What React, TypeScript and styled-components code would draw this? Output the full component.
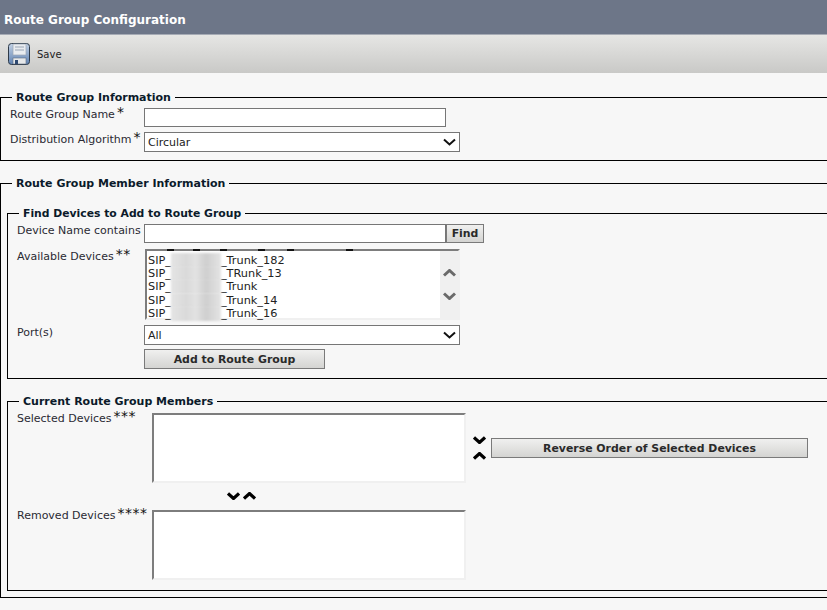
import React from "react";
import styled, { createGlobalStyle } from "styled-components";

const Global = createGlobalStyle`
  html, body { margin: 0; padding: 0; background: #f7f7f7; }
  body { font-family: "DejaVu Sans", Verdana, sans-serif; font-size: 11px; color: #1a1a1a; overflow: hidden; }
`;

const Page = styled.div`
  width: 827px;
  height: 610px;
  overflow: hidden;
  background: #f7f7f7;
`;

const TitleBar = styled.div`
  height: 35px;
  box-sizing: border-box;
  padding: 12px 0 0 4px;
  background: #6d7688;
  border-bottom: 1px solid #a6abb5;
  color: #fff;
  font: bold 12px/16px "DejaVu Sans", sans-serif;
`;

const Toolbar = styled.div`
  height: 38px;
  box-sizing: border-box;
  display: flex;
  align-items: center;
  gap: 6px;
  padding: 0 0 0 7px;
  background: linear-gradient(#e6e6e4, #c9c9c7);
  font-size: 10px;
  color: #222;
`;

const Content = styled.div`
  width: 1000px;
  padding-top: 16px;
`;

const Box = styled.fieldset<{ $nested?: boolean; $h: number; $gap?: number; $top?: number; $pad?: number }>`
  box-sizing: border-box;
  margin: ${(p) => p.$top ?? 0}px 0 ${(p) => p.$gap ?? 0}px ${(p) => (p.$nested ? 6 : 0)}px;
  padding: ${(p) => p.$pad ?? 0}px 0 0;
  height: ${(p) => p.$h}px;
  border: 1px solid #000;
  min-width: 0;
`;

const Legend = styled.legend<{ $tight?: boolean }>`
  margin-left: 11px;
  padding: 2px 4px 0;
  font: bold ${(p) => (p.$tight ? 10.8 : 11)}px/14px "DejaVu Sans", sans-serif;
  color: #0b1a2a;
  white-space: nowrap;
`;

const Row = styled.div<{ $h: number; $left: number }>`
  display: flex;
  align-items: flex-start;
  height: ${(p) => p.$h}px;
  padding-left: ${(p) => p.$left}px;
`;

const Label = styled.div<{ $w: number; $lift?: number }>`
  width: ${(p) => p.$w}px;
  flex: none;
  margin-top: ${(p) => -(p.$lift ?? 0)}px;
  line-height: 14px;
  color: #2a2a33;
  white-space: nowrap;
`;

const Star = styled.span`
  font-size: 14px;
  line-height: 10px;
  letter-spacing: 0.5px;
  color: #111;
  margin-left: 2px;
  position: relative;
  top: -1px;
`;

const TextInput = styled.div<{ $w: number }>`
  box-sizing: border-box;
  width: ${(p) => p.$w}px;
  height: 19px;
  background: #fff;
  border: 1px solid #767676;
`;

const Select = styled.div<{ $w: number }>`
  box-sizing: border-box;
  width: ${(p) => p.$w}px;
  height: 20px;
  background: #fff;
  border: 1px solid #767676;
  display: flex;
  align-items: center;
  justify-content: space-between;
  padding: 0 3px 0 3px;
  color: #222;
  font-size: 11px;
`;

const Button = styled.div<{ $w: number; $h?: number; $nudge?: number }>`
  box-sizing: border-box;
  width: ${(p) => p.$w}px;
  height: ${(p) => p.$h ?? 20}px;
  padding-top: ${(p) => p.$nudge ?? 0}px;
  display: flex;
  align-items: center;
  justify-content: center;
  border: 1px solid #7a7a7a;
  background: linear-gradient(#f0f0ef, #d4d4d2);
  font: bold 10.9px/14px "DejaVu Sans", sans-serif;
  color: #2a2a2a;
  white-space: nowrap;
`;

const ListBox = styled.div`
  position: relative;
  box-sizing: border-box;
  width: 315px;
  height: 71px;
  margin-left: 1px;
  display: flex;
  background: #fff;
  border: 2px solid;
  border-color: #7d7d7d #f0f0f0 #f0f0f0 #7d7d7d;
`;

const ListItems = styled.div`
  flex: 1;
  min-width: 0;
  padding: 3px 0 0 1px;
  font-size: 11.3px;
`;

const Ticks = styled.div`
  position: absolute;
  top: -2px;
  left: 0;
  display: flex;
`;

const Tick = styled.i<{ $x: number }>`
  display: block;
  width: 7px;
  height: 2px;
  margin-left: ${(p) => p.$x}px;
  background: #111;
`;

const ListItem = styled.div<{ $h: number }>`
  height: ${(p) => p.$h}px;
  line-height: 13px;
  display: flex;
  color: #222;
  white-space: pre;
`;

const Blur = styled.span`
  flex: none;
  width: 50px;
  height: 15px;
  margin-top: -1px;
  background: linear-gradient(90deg, #e4e4e4, #dadada 30%, #e2e2e2 50%, #cfcfcf 70%, #e4e4e4);
  filter: blur(1.2px);
`;

const Scrollbar = styled.div`
  flex: none;
  width: 18px;
  background: #f0f0f0;
  display: flex;
  flex-direction: column;
  align-items: center;
  gap: 15px;
  padding-top: 18px;
  box-sizing: border-box;
`;

const SaveIcon = () => (
  <svg width="24" height="24" viewBox="0 0 24 24">
    <defs>
      <linearGradient id="fl" x1="0" y1="0" x2="0" y2="1">
        <stop offset="0" stopColor="#c3d2e6" />
        <stop offset="1" stopColor="#5f82b2" />
      </linearGradient>
    </defs>
    <rect x="1.5" y="1.5" width="21" height="21" rx="3" fill="url(#fl)" stroke="#2e3a48" />
    <rect x="6" y="2" width="13" height="11" fill="#e9ecf0" stroke="#9aa6b5" strokeWidth="0.7" />
    <path d="M8 5h9M8 8h9" stroke="#9aa6b5" strokeWidth="1" />
    <rect x="6" y="16" width="13" height="6" fill="#e6e8ea" stroke="#5f6d80" strokeWidth="0.6" />
    <rect x="8" y="18" width="3" height="4" fill="#2f4a72" />
  </svg>
);

const Chevron = ({ dir, color, size = 13, weight = 2 }: { dir: "up" | "down"; color: string; size?: number; weight?: number }) => (
  <svg width={size} height={8} viewBox="0 0 13 8">
    <path d={dir === "down" ? "M1 1.5 L6.5 6.5 L12 1.5" : "M1 6.5 L6.5 1.5 L12 6.5"} fill="none" stroke={color} strokeWidth={weight} />
  </svg>
);

const Arrow = ({ dir }: { dir: "up" | "down" }) => <Chevron dir={dir} color="#000" size={13} weight={3.2} />;

const MemberGrid = styled.div<{ $h: number }>`
  display: flex;
  align-items: flex-start;
  height: ${(p) => p.$h}px;
  padding-left: 9px;
`;

const Area = styled.div`
  box-sizing: border-box;
  width: 314px;
  height: 70px;
  background: #fff;
  border: 2px solid;
  border-color: #7d7d7d #f0f0f0 #f0f0f0 #7d7d7d;
`;

const ArrowStack = styled.div`
  display: flex;
  flex-direction: column;
  align-items: center;
  gap: 8px;
  margin: 23px 0 0 6px;
  width: 15px;
`;

const ReverseWrap = styled.div`
  margin: 25px 0 0 4px;
`;

const MoveRow = styled.div`
  display: flex;
  gap: 3px;
  height: 24px;
  box-sizing: border-box;
  padding: 0 0 4px 219px;
  align-items: center;
`;

const rows: [string, string, number][] = [
  ["SIP_", "_Trunk_182", 13],
  ["SIP_", "_TRunk_13", 13],
  ["SIP_", "_Trunk", 14],
  ["SIP_", "_Trunk_14", 13],
  ["SIP_", "_Trunk_16", 13],
];

export default function App() {
  return (
    <Page>
      <Global />
      <TitleBar>Route Group Configuration</TitleBar>
      <Toolbar>
        <SaveIcon />
        <span>Save</span>
      </Toolbar>
      <Content>
        <Box $h={72} $gap={14} $pad={3}>
          <Legend>Route Group Information</Legend>
          <Row $h={24} $left={9}>
            <Label $w={134}>
              Route Group Name<Star>*</Star>
            </Label>
            <TextInput $w={302} />
          </Row>
          <Row $h={24} $left={9}>
            <Label $w={134} $lift={-1}>
              Distribution Algorithm<Star>*</Star>
            </Label>
            <Select $w={316}>
              Circular
              <Chevron dir="down" color="#111" size={13} />
            </Select>
          </Row>
        </Box>
        <Box $h={423}>
          <Legend>Route Group Member Information</Legend>
          <Box $nested $h={174} $top={14} $gap={14} $pad={3}>
            <Legend $tight>Find Devices to Add to Route Group</Legend>
            <Row $h={25} $left={9}>
              <Label $w={127}>Device Name contains</Label>
              <TextInput $w={302} />
              <Button $w={38} $h={19}>
                Find
              </Button>
            </Row>
            <Row $h={76} $left={9}>
              <Label $w={127} $lift={-1}>
                Available Devices<Star>**</Star>
              </Label>
              <ListBox>
                <Ticks>
                  <Tick $x={20} />
                  <Tick $x={19} />
                  <Tick $x={20} />
                  <Tick $x={31} />
                  <Tick $x={22} />
                  <Tick $x={52} />
                </Ticks>
                <ListItems>
                  {rows.map(([a, b, h]) => (
                    <ListItem key={b} $h={h}>
                      {a}
                      <Blur />
                      {b}
                    </ListItem>
                  ))}
                </ListItems>
                <Scrollbar>
                  <Chevron dir="up" color="#6a6a6a" size={13} weight={3} />
                  <Chevron dir="down" color="#6a6a6a" size={13} weight={3} />
                </Scrollbar>
              </ListBox>
            </Row>
            <Row $h={24} $left={9}>
              <Label $w={127} $lift={-1}>
                Port(s)
              </Label>
              <Select $w={316}>
                All
                <Chevron dir="down" color="#111" size={13} />
              </Select>
            </Row>
            <Row $h={20} $left={136}>
              <Button $w={181} $nudge={1}>
                Add to Route Group
              </Button>
            </Row>
          </Box>
          <Box $nested $h={198} $pad={4}>
            <Legend>Current Route Group Members</Legend>
            <MemberGrid $h={73}>
              <Label $w={135} $lift={1}>
                Selected Devices<Star>***</Star>
              </Label>
              <Area />
              <ArrowStack>
                <Arrow dir="down" />
                <Arrow dir="up" />
              </ArrowStack>
              <ReverseWrap>
                <Button $w={317} $nudge={1}>
                  Reverse Order of Selected Devices
                </Button>
              </ReverseWrap>
            </MemberGrid>
            <MoveRow>
              <Arrow dir="down" />
              <Arrow dir="up" />
            </MoveRow>
            <MemberGrid $h={70}>
              <Label $w={135} $lift={1}>
                Removed Devices<Star>****</Star>
              </Label>
              <Area />
            </MemberGrid>
          </Box>
        </Box>
      </Content>
    </Page>
  );
}
